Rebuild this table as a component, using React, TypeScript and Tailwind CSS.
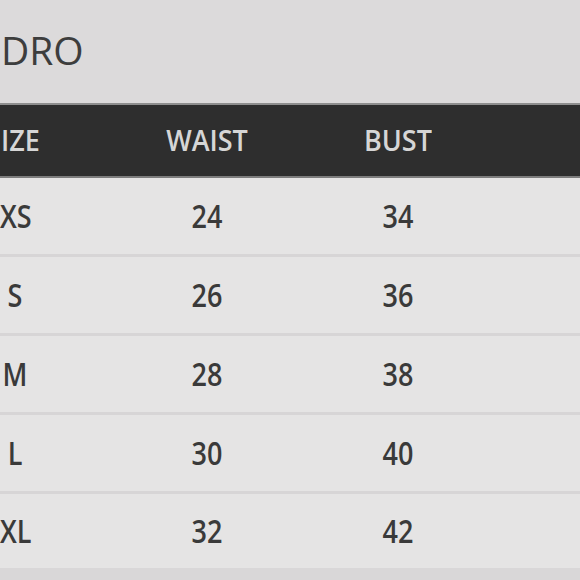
const rows = [
  { size: "XS", waist: "24", bust: "34" },
  { size: "S", waist: "26", bust: "36" },
  { size: "M", waist: "28", bust: "38" },
  { size: "L", waist: "30", bust: "40" },
  { size: "XL", waist: "32", bust: "42" },
];

export default function App() {
  return (
    <div
      className="w-[580px] h-[580px] overflow-hidden bg-[#e5e4e4] flex flex-col"
      style={{ fontFamily: '"Open Sans", "Noto Sans", sans-serif' }}
    >
      <div className="h-[103px] shrink-0 bg-[#dcdadb] flex items-center">
        <h1 className="text-[39px] leading-none text-[#3d3d3d] pl-[1px] pb-[4px]">DRO</h1>
      </div>

      <div className="h-[75px] shrink-0 bg-[#2e2e2e] border-t-2 border-b-2 border-t-[#8e8e8e] border-b-[#7d7d7d] flex items-center text-[27px] font-semibold text-[#d6d6d6]">
        <div className="w-[40px] shrink-0 pl-[1px] whitespace-nowrap scale-y-[1.1]">IZE</div>
        <div className="w-[120px] shrink-0 ml-[107px] text-center scale-y-[1.1]">WAIST</div>
        <div className="w-[120px] shrink-0 ml-[71px] text-center scale-y-[1.1]">BUST</div>
      </div>

      <div className="flex flex-col">
        {rows.map((r, i) => (
          <div
            key={r.size}
            className={`shrink-0 flex items-center text-[27px] font-semibold text-[#3a3a3a] ${i < rows.length - 1 ? "h-[79px] border-b-[3px] border-[#d7d5d6]" : "h-[74px]"}`}
          >
            <div className="w-[30px] shrink-0 text-center scale-y-[1.18]">{r.size}</div>
            <div className="w-[120px] shrink-0 ml-[117px] text-center scale-y-[1.18]">{r.waist}</div>
            <div className="w-[120px] shrink-0 ml-[71px] text-center scale-y-[1.18]">{r.bust}</div>
          </div>
        ))}
      </div>

      <div className="flex-1 bg-[#d9d7d8]" />
    </div>
  );
}
